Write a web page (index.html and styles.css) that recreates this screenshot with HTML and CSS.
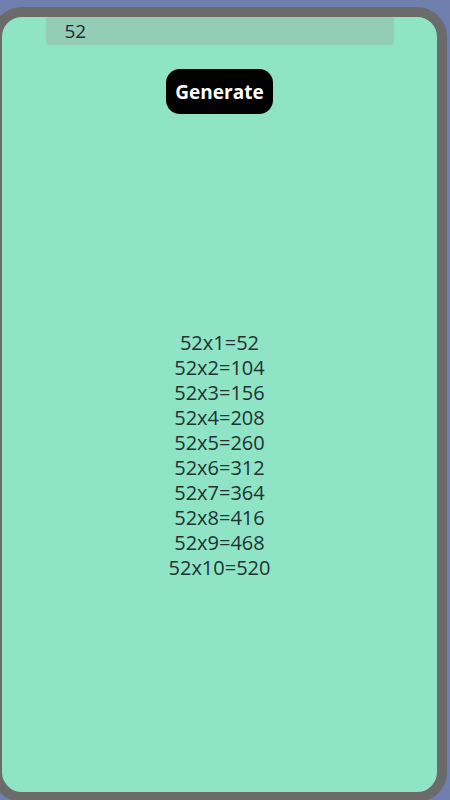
FILE: index.html
```html
<!DOCTYPE html>
<html lang="en">
  <head>
    <title>Multiplication Table</title>
    <link rel="stylesheet" href="styles.css">
  </head>
  <body>
    <div class="card">
      <input type="number" id="numberInput" class="number-input" value="52">
      <button class="generate-btn" onclick="generateTable()">Generate</button>
      <div id="table" class="table">
        <div>52x1=52</div>
        <div>52x2=104</div>
        <div>52x3=156</div>
        <div>52x4=208</div>
        <div>52x5=260</div>
        <div>52x6=312</div>
        <div>52x7=364</div>
        <div>52x8=416</div>
        <div>52x9=468</div>
        <div>52x10=520</div>
      </div>
    </div>

    <script>
      function generateTable() {
        const n = Number(document.getElementById("numberInput").value);
        const table = document.getElementById("table");
        table.innerHTML = "";
        for (let i = 1; i <= 10; i++) {
          const row = document.createElement("div");
          row.textContent = `${n}x${i}=${n * i}`;
          table.appendChild(row);
        }
      }
    </script>
  </body>
</html>
```

FILE: styles.css
```css
body {
  margin: 0;
  background-color: #6f7fae;
  font-family: "Open Sans", sans-serif;
  overflow: hidden;
}
.card {
  box-sizing: border-box;
  width: 455px;
  height: 795px;
  margin: 7px 0 0 -8px;
  border: 10px solid #6b6b6b;
  border-radius: 30px;
  background-color: #8ee4c5;
  display: flex;
  flex-direction: column;
  align-items: center;
}
.number-input {
  box-sizing: border-box;
  width: 348px;
  height: 28px;
  margin: 0;
  padding: 0 0 0 19px;
  border: none;
  border-radius: 0 0 4px 4px;
  background-color: #93cdb5;
  font-family: "Open Sans", sans-serif;
  font-size: 19px;
  color: #1b2a3a;
  outline: none;
}
.number-input::-webkit-inner-spin-button,
.number-input::-webkit-outer-spin-button {
  -webkit-appearance: none;
  margin: 0;
}
.generate-btn {
  margin-top: 24px;
  width: 107px;
  height: 45px;
  border: none;
  border-radius: 14px;
  background-color: #000;
  color: #fff;
  font-family: "Open Sans", sans-serif;
  font-weight: bold;
  font-size: 19px;
  padding: 0;
}
.table {
  margin-top: 216px;
  text-align: center;
  font-size: 20px;
  line-height: 25px;
  color: #1f3333;
}
```
